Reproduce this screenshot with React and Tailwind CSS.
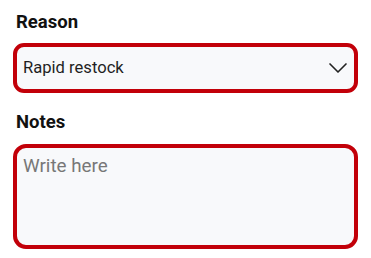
import { ChevronDown } from 'lucide-react'

export default function App() {
  return (
    <div className="w-[371px] h-[258px] bg-white px-[13px] pt-3 font-['Roboto',sans-serif]">
      <label className="block pl-[3px] text-[18.5px] leading-5 font-bold text-[#111]">Reason</label>
      <button className="mt-[11px] w-full h-[50px] flex items-center justify-between rounded-[11px] border-4 border-[#c20009] bg-[#f8f9fb] pl-[6px] text-left">
        <span className="text-[16.6px] text-[#1f1f1f]">Rapid restock</span>
        <ChevronDown size={32} strokeWidth={1.25} className="text-[#222]" />
      </button>

      <label className="mt-[19px] block pl-[3px] text-[18.5px] leading-5 font-bold text-[#111]">Notes</label>
      <textarea
        placeholder="Write here"
        className="mt-3 block w-full h-[105px] resize-none rounded-[13px] border-4 border-[#c20009] bg-[#f8f9fb] px-[6px] pt-[6px] text-[18.8px] leading-6 text-[#222] placeholder:text-[#777] outline-none"
      />
    </div>
  )
}
